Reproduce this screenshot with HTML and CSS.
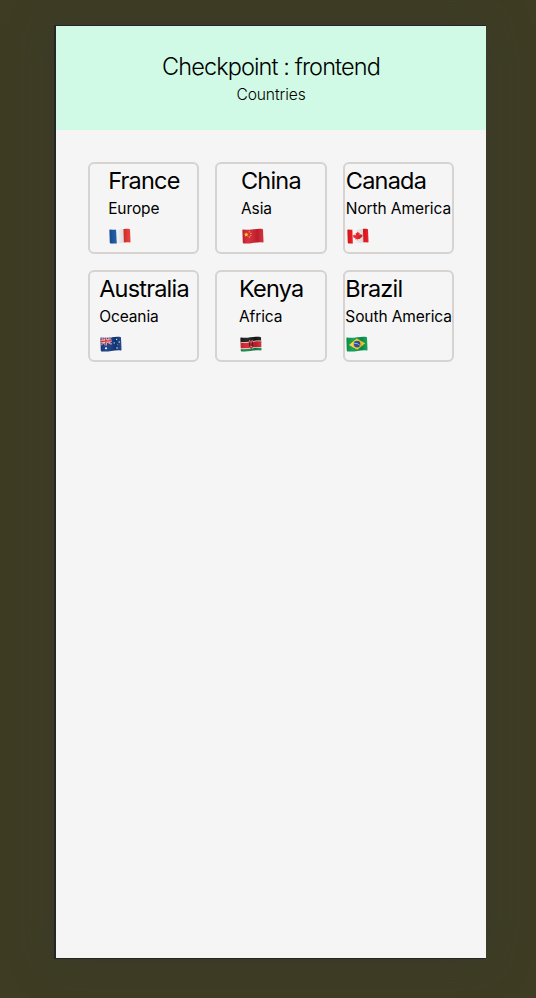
FILE: index.html
```html
<!DOCTYPE html>
<html lang="en">
<head>
<meta charset="utf-8">
<title>Countries</title>
<link rel="stylesheet" href="styles.css">
</head>
<body>
<svg class="defs" width="0" height="0" aria-hidden="true">
  <defs>
    <clipPath id="wave"><path d="M.4 2.1Q.4 1.5 1 1.5C8 2.8 13 .2 20.3 .9Q21 1 21 1.6L21.5 13.7Q21.5 14.5 20.8 14.4C14 13.5 9 16.3 1.5 15.4Q.8 15.3.8 14.5Z"/></clipPath>
    <linearGradient id="shade"><stop offset="0" stop-color="#000" stop-opacity=".12"/><stop offset=".3" stop-color="#fff" stop-opacity=".08"/><stop offset=".7" stop-color="#000" stop-opacity=".12"/><stop offset="1" stop-color="#fff" stop-opacity=".08"/></linearGradient>
  </defs>
</svg>
<div class="phone">
  <header class="header">
    <h1 class="title">Checkpoint : frontend</h1>
    <p class="subtitle">Countries</p>
  </header>
  <main class="grid">
    <article class="card"><div class="info france">
      <h2 class="name">France</h2><p class="continent">Europe</p>
      <div class="flag"><svg width="22" height="17"><g clip-path="url(#wave)"><path fill="#f4f4f4" d="M0 0h22v17H0z"/><path fill="#0f4f9c" d="M0 0h7l.8 17H0z"/><path fill="#ea3430" d="M14.4 0H22v17h-7z"/><path fill="url(#shade)" d="M0 0h22v17H0z"/></g></svg></div>
    </div></article>
    <article class="card"><div class="info china">
      <h2 class="name">China</h2><p class="continent">Asia</p>
      <div class="flag"><svg width="22" height="17"><g clip-path="url(#wave)"><path fill="#d3202f" d="M0 0h22v17H0z"/><path fill="#ffd91c" d="m4 4.2.7 1.6 1.7-.1-1.2 1.2.6 1.6-1.7-.8-1.4 1 .4-1.7-1.2-1.2 1.6-.1z"/><g fill="#f2b52d"><circle cx="7.3" cy="3.8" r=".65"/><circle cx="8.9" cy="5.4" r=".65"/><circle cx="8.9" cy="7.6" r=".65"/><circle cx="7.3" cy="9" r=".65"/></g><path fill="url(#shade)" d="M0 0h22v17H0z"/></g></svg></div>
    </div></article>
    <article class="card"><div class="info canada">
      <h2 class="name">Canada</h2><p class="continent">North America</p>
      <div class="flag"><svg width="22" height="17"><g clip-path="url(#wave)"><path fill="#f5f5f5" d="M0 0h22v17H0z"/><path fill="#ea1017" d="M0 0h5.3l.6 17H0zM15.9 0H22v17h-5.5z"/><path fill="#ee1c20" d="m10.8 3.5 1 1.8 1-.5-.3 2.4 1.4-1.2.3.8 1.5-.2-.6 1.4.5.5-2.5 1.8.2.8-2.2-.1v1.5h-.5V11l-2.2.4.2-.9-2.7-1.4.5-.5-.7-1.4 1.5.1.3-.9 1.5 1-.4-2.4 1 .3z"/><path fill="url(#shade)" d="M0 0h22v17H0z"/></g></svg></div>
    </div></article>
    <article class="card"><div class="info australia">
      <h2 class="name">Australia</h2><p class="continent">Oceania</p>
      <div class="flag"><svg width="22" height="17"><g clip-path="url(#wave)"><path fill="#123a82" d="M0 0h22v17H0z"/><path stroke="#fff" stroke-width="1.4" d="m0 1.7 11.5 6.5M.3 9.3 11.5 1"/><path stroke="#d92b35" stroke-width=".8" d="m0 1.7 11.5 6.5M.3 9.3 11.5 1"/><path stroke="#fff" stroke-width="2.4" d="M5.8 0v9.2M0 5.5 11.5 4.7"/><path stroke="#d92b35" stroke-width="1.5" d="M5.8 0v9.2M0 5.5 11.5 4.7"/><g fill="#fff"><circle cx="6" cy="12.2" r="1"/><circle cx="16.6" cy="3.4" r=".65"/><circle cx="14.2" cy="6.9" r=".65"/><circle cx="19.2" cy="6" r=".65"/><circle cx="17.8" cy="8.3" r=".4"/><circle cx="17" cy="12" r=".75"/></g><path fill="url(#shade)" d="M0 0h22v17H0z"/></g></svg></div>
    </div></article>
    <article class="card"><div class="info kenya">
      <h2 class="name">Kenya</h2><p class="continent">Africa</p>
      <div class="flag"><svg width="22" height="17"><g clip-path="url(#wave)"><path fill="#171717" d="M0 0h22v7H0z"/><path fill="#f1f1f1" d="M0 5.7c8 1.3 14-2 22-1v8c-8-1-14 2.2-22 1z"/><path fill="#d51f2b" d="M0 6.5c8 1.3 14-2 22-1v5.6c-8-1-14 2.2-22 1z"/><path fill="#168344" d="M0 12.9c8 1.3 14-2 22-1V17H0z"/><path stroke="#eee" stroke-width=".6" d="m9.4 4 3.6 9m-.2-9.2-3 9.3"/><ellipse cx="11.1" cy="8.3" rx="2" ry="4.2" fill="#a91821"/><path stroke="#fff" stroke-width=".8" d="M11.1 5.4v1.2m0 3.5v1.2"/><path stroke="#201515" stroke-width=".7" d="M9.5 6.5v3.6m3.2-3.6v3.6"/><path fill="url(#shade)" d="M0 0h22v17H0z"/></g></svg></div>
    </div></article>
    <article class="card"><div class="info brazil">
      <h2 class="name">Brazil</h2><p class="continent">South America</p>
      <div class="flag"><svg width="22" height="17"><g clip-path="url(#wave)"><path fill="#0a9a50" d="M0 0h22v17H0z"/><path fill="#fcd524" d="m10.7 2.4 8.5 4.9-7.9 6.5-8.4-4.9z"/><circle cx="11" cy="8.1" r="3.4" fill="#30489b"/><path fill="none" stroke="#dce5ed" stroke-width=".65" d="M7.8 7.3q3.7-.6 6.2 2.1"/><path fill="url(#shade)" d="M0 0h22v17H0z"/></g></svg></div>
    </div></article>
  </main>
</div>
</body>
</html>
```
FILE: styles.css
```css
* { box-sizing: border-box; }
body {
  margin: 0;
  height: 998px;
  padding: 25px 50px 39px 54px;
  overflow: hidden;
  background: #3e3d24;
  color: #000;
  font-family: Inter, "Liberation Sans", sans-serif;
}
h1, h2, p { margin: 0; font-weight: 400; white-space: nowrap; }
.defs { position: absolute; }
.phone {
  height: 934px;
  border: solid #25262a;
  border-width: 1px 0 1px 2px;
  background: #f5f5f5;
  box-shadow: 0 0 36px rgba(57, 54, 46, .55);
}
.header {
  height: 104px;
  padding: 25px 0 23px;
  background: #d0fae5;
  text-align: center;
}
.title { font-size: 23.5px; line-height: 32px; font-weight: 350; letter-spacing: -.9px; }
.subtitle { font-size: 15.6px; line-height: 24px; font-weight: 350; letter-spacing: -.1px; }
.grid {
  display: grid;
  grid-template-columns: repeat(3, minmax(0, 1fr));
  gap: 16px;
  padding: 32px;
}
.card {
  display: flex;
  justify-content: center;
  height: 92px;
  padding-top: 1px;
  border: 2px solid #d6d3d1;
  border-radius: 6px;
}
.info { flex: none; }
.name { font-size: 23.5px; line-height: 32px; font-weight: 430; letter-spacing: -.8px; }
.continent { font-size: 15.5px; line-height: 24px; letter-spacing: -.1px; }
.flag { height: 31px; padding: 7px 0 0 1px; }
.flag svg { display: block; }
.france { width: 71px; }
.china { width: 60px; }
.canada { width: 105px; }
.australia { width: 89px; }
.kenya { width: 64px; }
.brazil { width: 106px; }
```
